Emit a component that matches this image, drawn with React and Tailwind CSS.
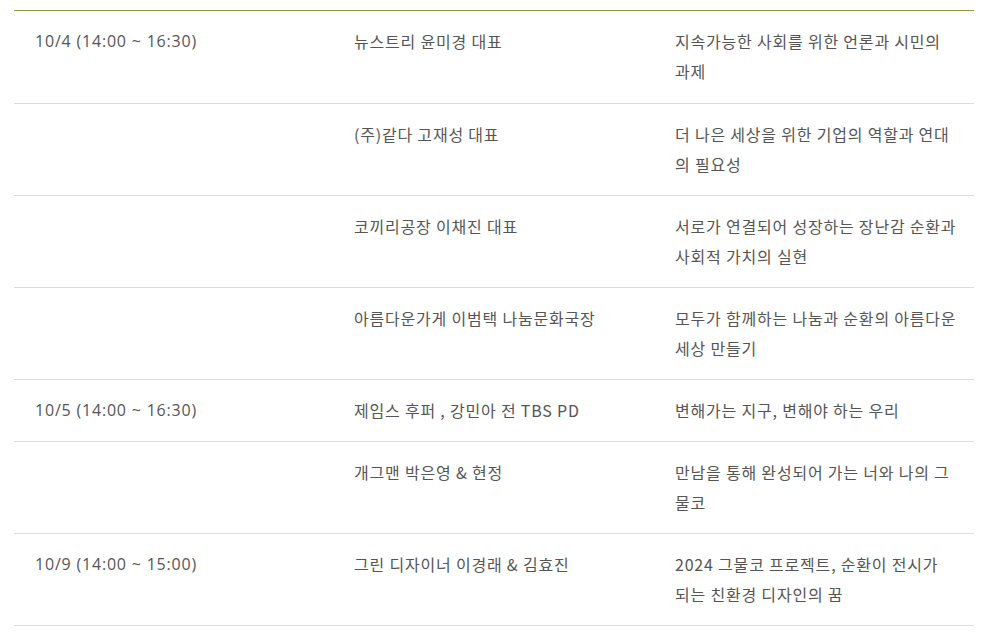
export default function App() {
  const rows = [
    { d: "10/4 (14:00 ~ 16:30)", s: "뉴스트리 윤미경 대표", t: ["지속가능한 사회를 위한 언론과 시민의", "과제"] },
    { d: "", s: "(주)같다 고재성 대표", t: ["더 나은 세상을 위한 기업의 역할과 연대", "의 필요성"] },
    { d: "", s: "코끼리공장 이채진 대표", t: ["서로가 연결되어 성장하는 장난감 순환과", "사회적 가치의 실현"] },
    { d: "", s: "아름다운가게 이범택 나눔문화국장", t: ["모두가 함께하는 나눔과 순환의 아름다운", "세상 만들기"] },
    { d: "10/5 (14:00 ~ 16:30)", s: "제임스 후퍼 , 강민아 전 TBS PD", t: ["변해가는 지구, 변해야 하는 우리"] },
    { d: "", s: "개그맨 박은영 & 현정", t: ["만남을 통해 완성되어 가는 너와 나의 그", "물코"] },
    { d: "10/9 (14:00 ~ 15:00)", s: "그린 디자이너 이경래 & 김효진", t: ["2024 그물코 프로젝트, 순환이 전시가", "되는 친환경 디자인의 꿈"] },
  ];
  const kr = "font-['Noto_Sans_CJK_KR',sans-serif] text-[16px] tracking-[0.8px]";
  return (
    <div className="bg-white w-[987px] h-[639px] pt-[10px] px-[14px] overflow-hidden">
      <div className="w-[960px] border-t border-[#8a9b3a]">
        {rows.map((r, i) => (
          <div key={i} className={`grid grid-cols-[319px_321px_320px] border-b border-[#dddddd] text-[#555555] leading-[30px] ${i === 0 ? "pb-px" : "pb-0"}`}>
            <div className="pl-[21px] pr-[10px] pt-[15px] pb-4 font-['Open_Sans',sans-serif] text-[16px] tracking-[0.8px] whitespace-nowrap">{r.d}</div>
            <div className={`pl-[21px] pr-[10px] pt-[15px] pb-4 whitespace-nowrap ${kr}`}>{r.s}</div>
            <div className={`pl-[21px] pr-[5px] pt-[15px] pb-4 ${kr}`}>
              {r.t.map((l, j) => (
                <div key={j} className="whitespace-nowrap">{l}</div>
              ))}
            </div>
          </div>
        ))}
      </div>
    </div>
  );
}
